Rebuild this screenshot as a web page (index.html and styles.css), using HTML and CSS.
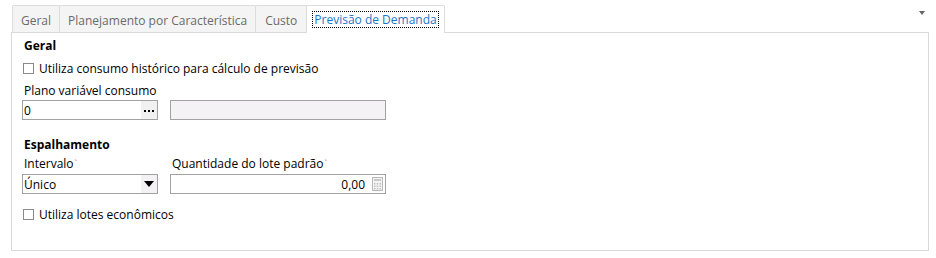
FILE: index.html
```html
<!DOCTYPE html>
<html lang="pt">
<head>
<meta charset="utf-8">
<link rel="stylesheet" href="styles.css">
</head>
<body>
<div class="page">
  <div class="tabbar">
    <div class="tab">Geral</div>
    <div class="tab">Planejamento por Característica</div>
    <div class="tab wide">Custo</div>
    <div class="tab active"><span class="focus">Previsão de Demanda</span></div>
    <div class="spacer"></div>
    <div class="menu-arrow"></div>
  </div>
  <div class="panel">
    <div class="section-title">Geral</div>
    <label class="check"><span class="box"></span><span>Utiliza consumo histórico para cálculo de previsão</span></label>
    <div class="field-label">Plano variável consumo</div>
    <div class="row">
      <div class="input w136"><span class="val">0</span><span class="dots"><svg width="10" height="2" viewBox="0 0 10 2"><rect x="0" y="0" width="2" height="2" fill="#000"/><rect x="4" y="0" width="2" height="2" fill="#000"/><rect x="8" y="0" width="2" height="2" fill="#000"/></svg></span></div>
      <div class="input w216 readonly"></div>
    </div>
    <div class="section-title second">Espalhamento</div>
    <div class="row labels">
      <div class="field-label w148">Intervalo<span class="req">`</span></div>
      <div class="field-label">Quantidade do lote padrão<span class="req">`</span></div>
    </div>
    <div class="row">
      <div class="input w136"><span class="val">Único</span><span class="sel-btn"><span class="tri"></span></span></div>
      <div class="input w216 num"><span class="val right">0,00</span><span class="calc">
        <svg width="11" height="14" viewBox="0 0 11 14"><rect x="0.5" y="0.5" width="10" height="13" fill="#f4f4f4" stroke="#b8b8b8"/><rect x="2" y="2" width="7" height="2" fill="#c8c8c8"/><g fill="#c0c0c0"><rect x="2" y="6" width="1.5" height="1.5"/><rect x="4.7" y="6" width="1.5" height="1.5"/><rect x="7.4" y="6" width="1.5" height="1.5"/><rect x="2" y="8.5" width="1.5" height="1.5"/><rect x="4.7" y="8.5" width="1.5" height="1.5"/><rect x="7.4" y="8.5" width="1.5" height="1.5"/><rect x="2" y="11" width="1.5" height="1.5"/><rect x="4.7" y="11" width="1.5" height="1.5"/><rect x="7.4" y="11" width="1.5" height="1.5"/></g></svg>
      </span></div>
    </div>
    <label class="check last"><span class="box"></span><span>Utiliza lotes econômicos</span></label>
  </div>
</div>
</body>
</html>
```
FILE: styles.css
```css
* { box-sizing: border-box; }
html, body { margin: 0; padding: 0; background: #fff; }
body {
  font-family: "Open Sans", "Noto Sans", sans-serif;
  font-size: 12px;
  letter-spacing: 0;
  color: #000;
}
.page { width: 936px; height: 258px; padding: 4px 8px 0 11px; }
.tabbar { display: flex; align-items: flex-end; height: 28px; padding-left: 1px; }
.tab {
  height: 27px;
  padding: 0 8px;
  display: flex;
  align-items: center;
  color: #6a6a6a;
  background: #f4f4f4;
  border: 1px solid #dcdcdc;
  border-bottom: none;
  border-radius: 2px 2px 0 0;
  margin-right: -1px;
  padding-top: 2px;
}
.tab.wide { padding: 2px 9px 0 9px; }
.tab.active {
  height: 28px;
  background: #fff;
  color: #1b76c8;
  padding: 0 6px;
  position: relative;
  top: 1px;
  padding-top: 0;
}
.tab.active .focus { outline: 1px dotted #000; padding: 0 1px; line-height: 15px; }
.spacer { flex: 1; }
.menu-arrow {
  align-self: flex-start;
  margin-top: 7px;
  margin-right: 3px;
  width: 0; height: 0;
  border-left: 3px solid transparent;
  border-right: 3px solid transparent;
  border-top: 4px solid #666;
}
.panel {
  width: 918px;
  height: 219px;
  border: 1px solid #d9d9d9;
  padding: 4px 0 0 10px;
}
.section-title { font-weight: bold; height: 17px; line-height: 17px; padding-left: 2px; }
.section-title.second { margin-top: 16px; }
.check { display: flex; align-items: center; height: 18px; margin-top: 5px; padding-left: 1px; }
.check .box {
  width: 11px; height: 11px;
  border: 1px solid #8a8a8a;
  background: #fff;
  margin-right: 5px;
}
.check.last { margin-top: 11px; }
.field-label { height: 18px; line-height: 18px; padding-left: 2px; margin-top: 5px; }
.row { display: flex; gap: 12px; }
.row.labels { gap: 0; margin-top: 2px; }
.row.labels .field-label { margin-top: 0; height: 19px; }
.w148 { width: 148px; }
.input {
  height: 20px;
  border: 1px solid #a2a2a2;
  background: #fff;
  display: flex;
  align-items: center;
}
.w136 { width: 136px; }
.w216 { width: 216px; }
.readonly { background: #f5f2f5; }
.val { flex: 1; padding-left: 1px; }
.val.right { text-align: right; padding-right: 4px; }
.dots {
  width: 16px; height: 18px;
  background: #f1f1f1;
  display: flex; align-items: center; justify-content: center;
  padding-top: 1px;
}
.dots svg { display: block; }
.sel-btn {
  width: 16px; height: 18px;
  background: #f4f1f4;
  display: flex; align-items: center; justify-content: center;
}
.tri {
  width: 0; height: 0;
  border-left: 5px solid transparent;
  border-right: 5px solid transparent;
  border-top: 6px solid #000;
}
.calc { width: 16px; height: 18px; display: flex; align-items: center; justify-content: center; }
.req { color: #e05050; font-size: 9px; vertical-align: top; margin-left: 1px; }
```
